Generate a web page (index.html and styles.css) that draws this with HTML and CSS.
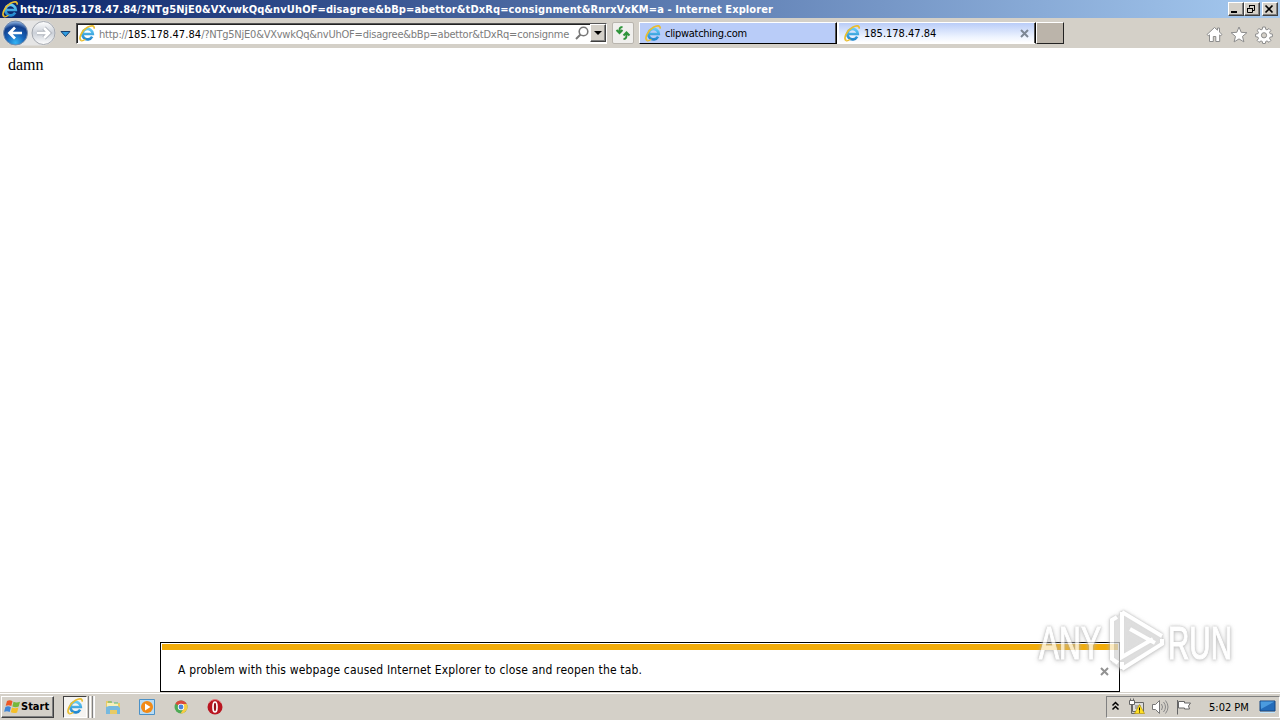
FILE: index.html
```html
<!DOCTYPE html>
<html lang="en">
<head>
    <meta charset="UTF-8">
    <title>Internet Explorer</title>
    <link rel="stylesheet" href="styles.css">
</head>
<body>
    <!-- shared icons -->
    <svg class="defs" width="0" height="0">
        <defs>
            <linearGradient id="ieBlue" x1="0" y1="0" x2="0" y2="1">
                <stop offset="0" stop-color="#63cbf5"/>
                <stop offset="1" stop-color="#2187cd"/>
            </linearGradient>
            <radialGradient id="backBlue" cx=".5" cy=".9" r=".85">
                <stop offset="0" stop-color="#35b4f4"/>
                <stop offset=".45" stop-color="#1763b8"/>
                <stop offset=".8" stop-color="#123f8c"/>
                <stop offset="1" stop-color="#7fa5d8"/>
            </radialGradient>
            <linearGradient id="fwdGray" x1="0" y1="0" x2="0" y2="1">
                <stop offset="0" stop-color="#fff"/>
                <stop offset=".5" stop-color="#cbd0d8"/>
                <stop offset="1" stop-color="#fff"/>
            </linearGradient>
            <symbol id="ie" viewBox="0 0 16 16">
                <path d="M12.400 11A4.900 4.900 0 1 1 13 8.500H4.500" fill="none" stroke="url(#ieBlue)" stroke-width="2.500"/>
                <path d="M2.200 14.700C-1 13 2.400 5.300 8 2.200c3.300-1.900 6.800-2 6.200 1.200" fill="none" stroke="#e9bd2f" stroke-width="1.600"/>
                <path d="M2 14.700c1 .4 2.500-.2 4-1.200" fill="none" stroke="#e9bd2f" stroke-width="1.200"/>
            </symbol>
        </defs>
    </svg>

    <header class="titlebar">
        <svg class="title-icon" width="17" height="17"><use href="#ie"/></svg>
        <span class="title-text">http://185.178.47.84/?NTg5NjE0&amp;VXvwkQq&amp;nvUhOF=disagree&amp;bBp=abettor&amp;tDxRq=consignment&amp;RnrxVxKM=a - Internet Explorer</span>
        <div class="window-buttons">
            <button><svg width="12" height="10"><path d="M2 8h6" stroke="#000" stroke-width="2"/></svg></button>
            <button><svg width="12" height="10"><path d="M4.500 3.500v-2h5v5h-2M4 1.500h6M2.500 4.500h5v4h-5zM2 4.500h6" fill="none" stroke="#000"/></svg></button>
            <button class="close"><svg width="12" height="10"><path d="M2.500 1.500l7 7m0-7l-7 7" stroke="#000" stroke-width="1.700"/></svg></button>
        </div>
    </header>

    <nav class="toolbar">
        <svg class="nav-buttons" width="74" height="30">
            <path d="M15 2.500h28a12.500 12.500 0 0 1 0 25H15a12.500 12.500 0 0 1 0-25z" fill="#e5e5e5"/>
            <circle cx="15.500" cy="15" r="12" fill="url(#backBlue)" stroke="#768ba9"/>
            <path d="M22 15H10.500M15 9.500L9.500 15l5.500 5.500" fill="none" stroke="#fff" stroke-width="2.700"/>
            <circle cx="43.500" cy="15" r="11.500" fill="url(#fwdGray)" stroke="#a4a8af"/>
            <path d="M37 15h11M44 10l5 5-5 5" fill="none" stroke="#aeb3bb" stroke-width="4.500"/>
            <path d="M37 15h11M44 10l5 5-5 5" fill="none" stroke="#fff" stroke-width="2.600"/>
            <path d="M61 13.500h9l-4.500 5z" fill="#2e9ce0" stroke="#173f6e"/>
        </svg>
        <div class="address">
            <svg width="17" height="17"><use href="#ie"/></svg>
            <span class="url">http://<b>185.178.47.84</b>/?NTg5NjE0&amp;VXvwkQq&amp;nvUhOF=disagree&amp;bBp=abettor&amp;tDxRq=consignme</span>
            <svg class="search" width="16" height="16"><circle cx="9.500" cy="6.500" r="4.300" fill="none" stroke="#777" stroke-width="1.600"/><path d="M6.500 9.500L2 14" stroke="#777" stroke-width="2"/></svg>
            <button class="dropdown"><svg width="8" height="4"><path d="M0 0h8L4 4z"/></svg></button>
        </div>
        <button class="refresh">
            <svg width="18" height="18"><path d="M8.500 3C5.500 3 5.500 4.500 5.500 8M2.500 6l3 3 3-3M9.500 15c3 0 3-2 3-5M9.500 11.500l3-3 3 3" fill="none" stroke="#2e943a" stroke-width="2"/></svg>
        </button>
        <div class="tabs">
            <div class="tab">
                <svg width="17" height="17"><use href="#ie"/></svg>
                <span class="tab-site">clipwatching.com</span>
            </div>
            <div class="tab active">
                <svg width="17" height="17"><use href="#ie"/></svg>
                <span class="tab-ip">185.178.47.84</span>
                <svg class="tab-close" width="9" height="9"><path d="M1 1l7 7m0-7L1 8" stroke="#7d8794" stroke-width="2"/></svg>
            </div>
            <div class="new-tab"></div>
        </div>
        <div class="tools">
            <svg width="17" height="17"><path d="M1 8.500l7.500-7 3 2.700V2h2v4l2.500 2.500-1.300 1.200-1-.8V15.500h-3.900v-5H7.300v5H3.500V8.900l-1.200.9z" fill="#fff" stroke="#8c8c8c"/></svg>
            <svg width="18" height="17"><path d="M9 1l2.200 5.300 5.700.4-4.400 3.700 1.400 5.500L9 12.900l-4.900 3 1.400-5.500L1.100 6.700l5.700-.4z" fill="#fff" stroke="#8c8c8c"/></svg>
            <svg width="18" height="18" viewBox="0 0 18 18">
                <path d="M7.700 1h2.600l.4 2.300 1.300.6 2-1.400 1.900 1.900-1.400 2 .6 1.300 2.300.4v2.600l-2.300.4-.6 1.300 1.400 2-1.900 1.900-2-1.400-1.300.6-.4 2H7.700l-.4-2-1.300-.6-2 1.400-1.900-1.900 1.400-2-.6-1.300L.6 10.700V8.100l2.300-.4.600-1.300-1.400-2L4 2.500l2 1.400 1.300-.6z" fill="#fff" stroke="#8c8c8c"/>
                <circle cx="9" cy="9.300" r="2.600" fill="#d4d0c8" stroke="#8c8c8c"/>
            </svg>
        </div>
    </nav>

    <main class="page">
        <p class="content">damn</p>
        <div class="notification">
            <div class="stripe"></div>
            <span class="message">A problem with this webpage caused Internet Explorer to close and reopen the tab.</span>
            <svg class="dismiss" width="9" height="9"><path d="M1 1l7 7m0-7L1 8" stroke="#929292" stroke-width="2"/></svg>
        </div>
    </main>

    <svg class="watermark" width="210" height="80" viewBox="1030 602 210 80">
        <g fill="#fff" stroke="#fff" stroke-width="1.200">
            <text x="1039" y="659" textLength="62" lengthAdjust="spacingAndGlyphs">ANY</text>
            <text x="1168" y="659" textLength="64" lengthAdjust="spacingAndGlyphs">RUN</text>
        </g>
        <path d="M1122 612l40 24v9l-40 24-10-6v-43l10-6z" fill="#e6e6e6" fill-opacity=".6"/>
        <g fill="none" stroke="#fff" stroke-width="4">
            <path d="M1122 612v45l31-18M1122 612l40 24M1130 629l25 14"/>
            <path d="M1117 617l-5 3v39l6 4M1122 669l40-25v-5M1122 662v7"/>
        </g>
    </svg>

    <footer class="taskbar">
        <button class="start">
            <svg width="17" height="16" viewBox="0 0 17 16">
                <path d="M3 2c2-1.200 4-.8 5.500.2L7.300 7C5.600 6 4 5.800 1.700 6.800z" fill="#ed5726"/>
                <path d="M9.500 2.800c2 1 4 1 6.500 0l-1.300 4.700c-2.400 1-4.300.8-6.300-.1z" fill="#75b83b"/>
                <path d="M1.400 8c2-1 4-.8 5.500.2L5.700 13c-1.700-1-3.300-1.200-5.600-.2z" fill="#3f86d8"/>
                <path d="M8 8.600c2 1 4 1 6.400 0l-1.300 4.800c-2.400 1-4.300.8-6.300-.1z" fill="#f6bf27"/>
            </svg>
            <span>Start</span>
        </button>
        <div class="task-group">
            <div class="task"><svg width="17" height="17"><use href="#ie"/></svg></div>
            <i></i><i></i>
        </div>
        <div class="launchers">
            <svg width="18" height="18">
                <path d="M2 3h5l1 2h8v11H2z" fill="#e8cb65"/><path d="M3 5h11v5H3z" fill="#f8f0b8"/><path d="M4 4h4M10 5h4" stroke="#54b779"/>
                <path d="M2 16V9l3-1h9l2 2v6h-3v-4H6v4z" fill="#76b9df"/>
            </svg>
            <svg width="18" height="18"><path d="M1.500 1.500h15v15h-15z" fill="#b8dcf5" stroke="#4b91c7"/><circle cx="9" cy="9" r="6" fill="#f28a16"/><path d="M7 5.500l5.500 3.500L7 12.500z" fill="#fff"/></svg>
            <svg width="18" height="18">
                <circle cx="9" cy="9" r="6.500" fill="#4eaa55"/><path d="M9 9L3.400 5.700A6.500 6.500 0 0 1 14.700 6H9z" fill="#da493b"/><path d="M9 6h5.700A6.500 6.500 0 0 1 8.500 15.500L12 10z" fill="#f7cb42"/>
                <circle cx="9" cy="9" r="3.200" fill="#fff"/><circle cx="9" cy="9" r="2.400" fill="#4a83d9"/>
            </svg>
            <svg width="18" height="18"><circle cx="9" cy="9" r="7.500" fill="#b91520"/><path d="M3 5a7 7 0 0 1 12 0" stroke="#e8787b" fill="none"/><ellipse cx="9" cy="9" rx="2" ry="5" fill="#941019" stroke="#fff" stroke-width="1.700"/></svg>
        </div>
        <div class="tray">
            <svg class="chevrons" width="9" height="12"><path d="M1.500 4.500l3-3 3 3M1.500 8.500l3-3 3 3" fill="none" stroke="#000" stroke-width="1.500"/></svg>
            <svg width="18" height="18"><path d="M4.500 4.500h11v9h-11z" fill="#ddd" stroke="#666"/><path d="M7 7h6v4H7z" fill="#aaa"/><path d="M1.500 2.500h5v4h-5zM2.500.5v2m3-2v2" fill="#fff" stroke="#666"/><path d="M3.500 6.500v9h4" fill="none" stroke="#666"/><path d="M11.500 6.500l5 9h-10z" fill="#ffdf24" stroke="#aa8900" stroke-width=".6"/><path d="M11.500 9.500v3m0 1v1" stroke="#000"/></svg>
            <svg class="speaker" width="19" height="18"><path d="M1.500 6.500h3l4-4v13l-4-4h-3z" fill="#fff" stroke="#777"/><path d="M10.500 6q2 3 0 6M12.500 4q4 5 0 10M14.500 2.500q5 6.500 0 13" fill="none" stroke="#888"/></svg>
            <svg class="flag" width="18" height="18"><path d="M2.500 2v14.500M3.500 3.500h6v1.500h6l-2 3 1 3h-5V10h-6z" fill="#fff" stroke="#666"/></svg>
            <span class="clock">5:02 PM</span>
            <svg class="desktop" width="17" height="15"><path d="M1 2h15v10H1z" fill="#246cba" stroke="#174780"/><path d="M1.500 2.500h14L2 10z" fill="#4b9bdf"/><path d="M1 13.500h15" stroke="#bfe3fb"/></svg>
        </div>
    </footer>
</body>
</html>
```
FILE: styles.css
```css
* {
    box-sizing: border-box;
}
body {
    margin: 0;
    width: 1280px;
    height: 720px;
    overflow: hidden;
    display: flex;
    flex-direction: column;
    font: 11px "DejaVu Sans Condensed", "DejaVu Sans", sans-serif;
    font-stretch: condensed;
    color: #000;
    background: #fff;
}
svg {
    display: block;
    flex: none;
}
.defs {
    position: absolute;
}
span {
    white-space: nowrap;
}
button {
    padding: 0;
    font: inherit;
    background: #d4d0c8;
    border: 1px solid;
    border-color: #fff #404040 #404040 #fff;
    box-shadow: inset -1px -1px #808080;
}
.titlebar {
    height: 18px;
    display: flex;
    align-items: center;
    padding: 0 2px;
    color: #fff;
    font-weight: bold;
    background: linear-gradient(90deg, #0a246a, #a6caf0);
}
.title-text {
    margin-left: 1px;
    letter-spacing: 0.11px;
}
.window-buttons {
    display: flex;
    margin-left: auto;
}
.window-buttons button {
    width: 16px;
    height: 14px;
}
.window-buttons .close {
    margin-left: 2px;
}
.toolbar {
    height: 30px;
    display: flex;
    align-items: center;
    background: #d4d0c8;
}
.address {
    width: 531px;
    height: 21px;
    margin-left: 2px;
    padding-left: 2px;
    display: flex;
    align-items: center;
    background: #fff;
    border: 1px solid;
    border-color: #555 #fff #fff #555;
    box-shadow: inset 1px 1px #222;
}
.url {
    margin-left: 3px;
    padding-top: 2px;
    color: #7c7c7c;
    letter-spacing: -0.23px;
}
.url b {
    font-weight: normal;
    color: #000;
    letter-spacing: 0.08px;
}
.search {
    margin-left: auto;
}
.dropdown {
    width: 16px;
    height: 18px;
    display: flex;
    align-items: center;
    justify-content: center;
}
.refresh {
    width: 22px;
    height: 22px;
    margin-left: 5px;
    display: flex;
    align-items: center;
    justify-content: center;
    background: #f0efed;
    border: 1px solid #b9b5ae;
    border-radius: 2px;
    box-shadow: none;
}
.tabs {
    height: 22px;
    display: flex;
    margin-left: 5px;
}
.tab {
    width: 198px;
    display: flex;
    align-items: center;
    padding-left: 5px;
    background: #b9ccf8;
    border: 1px solid;
    border-color: #fff #000 #000 #fff;
    box-shadow: inset -1px 0 #555;
}
.tab span {
    margin-left: 3px;
    padding-top: 1px;
}
.tab-site {
    letter-spacing: -0.3px;
}
.tab.active {
    width: 199px;
    background: linear-gradient(#b9ccf8, #eef4ff 70%, #fff);
    border-left-width: 2px;
    border-bottom-color: #fff;
}
.tab-close {
    margin-left: auto;
    margin-right: 6px;
}
.new-tab {
    width: 28px;
    background: #bbb4aa;
    border: 1px solid;
    border-color: #fff #222 #222 #fff;
}
.tools {
    display: flex;
    gap: 7px;
    margin: 3px 7px 0 auto;
}
.page {
    height: 644px;
    display: flex;
    flex-direction: column;
    justify-content: space-between;
}
.content {
    margin: 8px;
    font: 16px "Liberation Serif", serif;
}
.notification {
    width: 960px;
    height: 50px;
    margin: 0 auto;
    padding: 1px;
    display: grid;
    grid-template-columns: 1fr auto;
    grid-template-rows: 6px 1fr;
    align-items: center;
    background: #fff;
    border: 1px solid #000;
}
.stripe {
    grid-column: 1 / 3;
    height: 6px;
    background: #f2ac09;
}
.message {
    padding-left: 16px;
    font-size: 12px;
    letter-spacing: 0.17px;
}
.dismiss {
    margin: 2px 9px 0 0;
}
/* sits over the page and the notification bar */
.watermark {
    position: absolute;
    left: 1030px;
    top: 602px;
    opacity: .75;
    font: 46px "Liberation Sans", sans-serif;
    filter: drop-shadow(0 0 1px #aaa) drop-shadow(0 1px 2px #bbb);
    overflow: visible;
}
.taskbar {
    height: 28px;
    display: flex;
    align-items: center;
    padding-left: 1px;
    background: #d4d0c8;
    border-top: 1px solid #d4d0c8;
    box-shadow: inset 0 1px #fff;
}
.start {
    width: 53px;
    height: 22px;
    padding-left: 2px;
    display: flex;
    align-items: center;
    font-weight: bold;
}
.task-group {
    height: 22px;
    margin-left: 9px;
    display: flex;
    gap: 1px;
}
.task {
    width: 24px;
    padding: 1px 3px;
    background: #f5f4f1;
    border: 1px solid;
    border-color: #404040 #fff #fff #404040;
}
.task-group i {
    width: 3px;
    background: #eee;
    border-left: 1px solid #808080;
    border-right: 1px solid #fff;
}
.launchers {
    display: flex;
    gap: 16px;
    margin-left: 9px;
}
.tray {
    width: 174px;
    height: 22px;
    margin-left: auto;
    display: flex;
    align-items: center;
    padding-left: 4px;
    border: 1px solid;
    border-color: #808080 #fff #fff #808080;
}
.chevrons {
    margin-right: 8px;
}
.speaker {
    margin-left: 5px;
}
.flag {
    margin-left: 5px;
}
.clock {
    margin-left: 16px;
    padding-top: 1px;
}
.desktop {
    margin-left: auto;
    margin-right: 3px;
}
```
